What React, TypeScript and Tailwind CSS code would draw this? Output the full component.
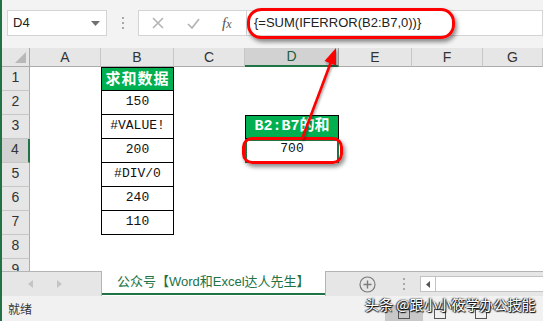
const ui = "font-['Liberation_Sans','Noto_Sans_CJK_SC',sans-serif]";
const mono = "font-['Liberation_Mono','Noto_Sans_CJK_SC',monospace]";

const columns = [
  { key: 'A', width: 'w-[71px]' },
  { key: 'B', width: 'w-[73px]' },
  { key: 'C', width: 'w-[71px]' },
  { key: 'D', width: 'w-[94px]' },
  { key: 'E', width: 'w-[73px]' },
  { key: 'F', width: 'w-[71px]' },
  { key: 'G', width: 'w-[60px]' },
];

const bValues: Record<number, string> = {
  2: '150',
  3: '#VALUE!',
  4: '200',
  5: '#DIV/0',
  6: '240',
  7: '110',
};

function Cell({ row, col, width }: { row: number; col: string; width: string }) {
  if (col === 'B' && row === 1) {
    return (
      <div className={`${width} h-full flex items-end justify-center pb-[2px] bg-[#00b050] border border-black text-white font-bold text-[15px] tracking-[1px] font-['Noto_Sans_CJK_SC',sans-serif] leading-[20px]`}>
        求和数据
      </div>
    );
  }
  if (col === 'B' && row >= 2 && row <= 7) {
    return (
      <div className={`${width} h-full flex items-end justify-center pb-[3px] bg-white border-x border-b border-black text-[13px] text-[#111] ${mono}`}>
        {bValues[row]}
      </div>
    );
  }
  if (col === 'D' && row === 3) {
    return (
      <div className={`${width} h-full flex items-end justify-center pb-[1px] bg-[#00b050] border border-black text-white font-bold text-[15px] leading-[20px] ${mono}`}>
        B2:B7的和
      </div>
    );
  }
  if (col === 'D' && row === 4) {
    return (
      <div className={`${width} h-full flex items-end justify-center pb-[3px] bg-white border-2 border-[#217346] text-[13px] text-[#111] ${mono}`}>
        700
      </div>
    );
  }
  return <div className={`${width} h-full bg-white`} />;
}

function Toolbar() {
  return (
    <div className="h-[48px] flex items-start pt-[10px] bg-[#f3f3f3]">
      <div className="ml-[5px] w-[100px] h-[26px] bg-white border border-[#d4d4d4] flex items-center pl-[5px] pr-[6px] justify-between">
        <span className="text-[13px] text-[#222]">D4</span>
        <svg width="9" height="5" viewBox="0 0 9 5"><path d="M0 0h9L4.5 5z" fill="#707070" /></svg>
      </div>
      <div className="w-[31px] h-[26px] flex flex-col items-center justify-center gap-[3px]">
        <span className="w-[2px] h-[2px] bg-[#a8a8a8]" />
        <span className="w-[2px] h-[2px] bg-[#a8a8a8]" />
        <span className="w-[2px] h-[2px] bg-[#a8a8a8]" />
      </div>
      <div className="w-[109px] h-[26px] bg-white border border-[#d4d4d4] flex items-center">
        <svg className="ml-[13px]" width="12" height="12" viewBox="0 0 12 12"><path d="M1 1l10 10M11 1L1 11" stroke="#b4b4b4" strokeWidth="1.6" /></svg>
        <svg className="ml-[23px]" width="13" height="11" viewBox="0 0 13 11"><path d="M1 6l4 4 7-9" stroke="#b4b4b4" strokeWidth="1.7" fill="none" /></svg>
        <span className="ml-[22px] italic text-[15px] text-[#555] font-['Liberation_Serif',serif]">f<span className="text-[12px]">x</span></span>
      </div>
      <div className="flex-1 h-[26px] bg-white border-y border-r border-[#d4d4d4] flex items-center pl-[7px]">
        <span className="text-[13px] text-[#222]">{'{=SUM(IFERROR(B2:B7,0))}'}</span>
      </div>
    </div>
  );
}

function Grid() {
  const rows = [1, 2, 3, 4, 5, 6, 7, 8, 9];
  return (
    <div className="h-[223px] overflow-hidden bg-white">
      <div className="flex h-[19px]">
        <div className="w-[28px] h-full bg-[#e6e6e6] border-r border-b border-[#ababab] relative">
          <svg className="absolute right-[3px] bottom-[3px]" width="11" height="11" viewBox="0 0 11 11"><path d="M11 0v11H0z" fill="#b8b8b8" /></svg>
        </div>
        {columns.map((c) =>
          c.key === 'D' ? (
            <div key={c.key} className={`${c.width} h-full flex items-center justify-center bg-[#d2d2d2] border-r border-[#9e9e9e] border-b-2 border-b-[#217346] text-[14px] text-[#1e5e3a]`}>
              {c.key}
            </div>
          ) : (
            <div key={c.key} className={`${c.width} h-full flex items-center justify-center bg-[#e6e6e6] border-r border-[#c6c6c6] border-b border-b-[#ababab] text-[14px] text-[#333]`}>
              {c.key}
            </div>
          )
        )}
      </div>
      {rows.map((r) => (
        <div key={r} className="flex h-[24px]">
          {r === 4 ? (
            <div className="w-[28px] h-full flex items-end justify-center pb-[2px] bg-[#d2d2d2] border-b border-[#c6c6c6] border-r-2 border-r-[#217346] text-[14px] text-[#333]">
              {r}
            </div>
          ) : (
            <div className="w-[28px] h-full flex items-end justify-center pb-[2px] bg-[#e6e6e6] border-b border-[#c6c6c6] border-r border-r-[#ababab] text-[14px] text-[#333]">
              {r}
            </div>
          )}
          {columns.map((c) => (
            <Cell key={c.key} row={r} col={c.key} width={c.width} />
          ))}
        </div>
      ))}
    </div>
  );
}

function SheetTabs() {
  return (
    <div className="h-[25px] flex bg-[#e6e6e6]">
      <div className="w-[99px] h-full border-t border-[#b4b4b4] flex items-center">
        <svg className="ml-[26px]" width="5" height="8" viewBox="0 0 5 8"><path d="M5 0v8L0 4z" fill="#c4c4c4" /></svg>
        <svg className="ml-[24px]" width="5" height="8" viewBox="0 0 5 8"><path d="M0 0v8l5-4z" fill="#c4c4c4" /></svg>
      </div>
      <div className="w-[225px] h-full bg-white border-l border-r border-[#b4b4b4] flex flex-col">
        <div className="flex-1 flex items-center pl-[15px] text-[13px] text-[#217346]">公众号【Word和Excel达人先生】</div>
        <div className="h-[2px] bg-[#217346] mb-[1px]" />
      </div>
      <div className="flex-1 h-full border-t border-[#b4b4b4] flex items-center">
        <svg className="ml-[33px]" width="17" height="17" viewBox="0 0 17 17">
          <circle cx="8.5" cy="8.5" r="7.5" fill="none" stroke="#7a7a7a" strokeWidth="1.2" />
          <path d="M8.5 4.5v8M4.5 8.5h8" stroke="#7a7a7a" strokeWidth="1.4" />
        </svg>
        <div className="ml-[27px] flex flex-col gap-[3px]">
          <span className="w-[2px] h-[2px] bg-[#a8a8a8]" />
          <span className="w-[2px] h-[2px] bg-[#a8a8a8]" />
          <span className="w-[2px] h-[2px] bg-[#a8a8a8]" />
        </div>
        <div className="ml-[15px] flex-1 h-[16px] flex">
          <div className="w-[16px] h-full bg-white border border-[#c2c2c2] flex items-center justify-center">
            <svg width="4" height="7" viewBox="0 0 4 7"><path d="M4 0v7L0 3.5z" fill="#555" /></svg>
          </div>
          <div className="flex-1 h-full bg-white border-y border-[#c2c2c2]" />
        </div>
      </div>
    </div>
  );
}

function StatusBar() {
  return (
    <div className="h-[25px] flex items-center bg-[#f1f1f1] relative">
      <span className="ml-[6px] text-[12px] text-[#333] font-['Noto_Sans_CJK_SC',sans-serif]">就绪</span>
      <div className="absolute left-[383px] top-[9px] w-[38px] h-[16px] bg-[#c8c8c8] flex justify-center pt-[4px]">
        <div className="w-[12px] h-[10px] border border-[#555]" />
      </div>
      <div className="absolute left-[432px] top-[13px] w-[12px] h-[10px] border border-[#555]" />
      <div className="absolute left-[473px] top-[13px] w-[12px] h-[10px] border border-[#555]" />
      <span className="absolute left-[363px] top-[-2px] whitespace-nowrap text-[14px] leading-[20px] text-white font-['Noto_Sans_CJK_SC',sans-serif] [text-shadow:0_0_2px_#000,1px_1px_1px_#000,-1px_0_1px_#333]">
        头条 @跟小小筱学办公技能
      </span>
    </div>
  );
}

export default function App() {
  return (
    <div className={`relative w-[543px] h-[321px] overflow-hidden border-l-2 border-[#217346] bg-[#f3f3f3] ${ui}`}>
      <Toolbar />
      <Grid />
      <SheetTabs />
      <StatusBar />

      <div className="absolute left-[245px] top-[8px] w-[208px] h-[31px] rounded-[14px] border-[3px] border-[#f00] shadow-[2px_3px_4px_rgba(0,0,0,0.45)] pointer-events-none" />
      <div className="absolute left-[240px] top-[137px] w-[101px] h-[27px] rounded-[10px] border-[3px] border-[#f00] shadow-[2px_3px_4px_rgba(0,0,0,0.45)] pointer-events-none" />
      <svg className="absolute left-[-2px] top-0 pointer-events-none drop-shadow-[1px_2px_1px_rgba(0,0,0,0.35)]" width="543" height="321" viewBox="0 0 543 321">
        <path d="M302 139L331 62" stroke="#f00" strokeWidth="2.6" />
        <path d="M336 48L336 65.5L324.5 61z" fill="#f00" />
      </svg>
    </div>
  );
}
